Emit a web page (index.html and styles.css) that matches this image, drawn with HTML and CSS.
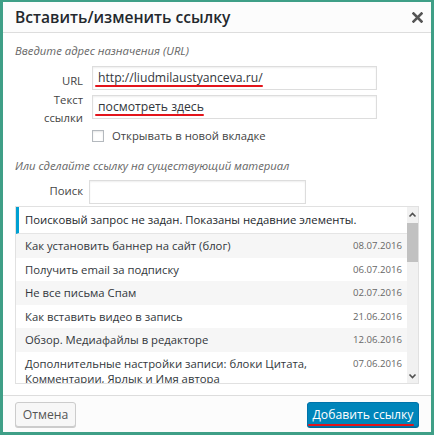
FILE: index.html
```html
<!DOCTYPE html>
<html lang="ru">
<head>
<meta charset="utf-8">
<title>Вставить/изменить ссылку</title>
<link rel="stylesheet" href="styles.css">
</head>
<body>
<div class="dialog">
  <div class="head">
    <h1 class="title">Вставить/изменить ссылку</h1>
    <span class="close">
      <svg width="11" height="11" viewBox="0 0 11 11"><path d="M1.5 1.5 L9.5 9.5 M9.5 1.5 L1.5 9.5" stroke="#555" stroke-width="2.6" stroke-linecap="square"/></svg>
    </span>
  </div>
  <div class="body">
    <p class="hint">Введите адрес назначения (URL)</p>
    <div class="row row-url">
      <label class="lbl">URL</label>
      <div class="field"><span class="mark">http://liudmilaustyanceva.ru/</span></div>
    </div>
    <div class="row row-text">
      <label class="lbl">Текст<br>ссылки</label>
      <div class="field field-text"><span class="mark">посмотреть здесь</span></div>
    </div>
    <div class="check-row">
      <span class="box"></span>
      <span>Открывать в новой вкладке</span>
    </div>
    <p class="hint hint-2">Или сделайте ссылку на существующий материал</p>
    <div class="row row-search">
      <label class="lbl lbl-search">Поиск</label>
      <div class="field field-search"></div>
    </div>
    <div class="results">
      <div class="list">
        <div class="notice">Поисковый запрос не задан. Показаны недавние элементы.</div>
        <div class="item alt"><span class="name">Как установить баннер на сайт (блог)</span><span class="date">08.07.2016</span></div>
        <div class="item"><span class="name">Получить email за подписку</span><span class="date">06.07.2016</span></div>
        <div class="item alt"><span class="name">Не все письма Спам</span><span class="date">02.07.2016</span></div>
        <div class="item"><span class="name">Как вставить видео в запись</span><span class="date">21.06.2016</span></div>
        <div class="item alt"><span class="name">Обзор. Медиафайлы в редакторе</span><span class="date">12.06.2016</span></div>
        <div class="item"><span class="name">Дополнительные настройки записи: блоки Цитата, Комментарии, Ярлык и Имя автора</span><span class="date">07.06.2016</span></div>
      </div>
      <div class="scrollbar">
        <svg class="arrow" width="11" height="16" viewBox="0 0 11 16"><path d="M2.5 9.5 L5.5 6.5 L8.5 9.5" fill="none" stroke="#505050" stroke-width="1.6"/></svg>
        <div class="thumb"></div>
        <div class="track"></div>
        <svg class="arrow" width="11" height="14" viewBox="0 0 11 14"><path d="M2.5 5.5 L5.5 8.5 L8.5 5.5" fill="none" stroke="#505050" stroke-width="1.6"/></svg>
      </div>
    </div>
  </div>
  <div class="foot">
    <button class="btn btn-cancel">Отмена</button>
    <button class="btn btn-primary"><span class="mark mark-btn">Добавить ссылку</span></button>
  </div>
</div>
</body>
</html>
```
FILE: styles.css
```css
* { box-sizing: border-box; }
html, body { margin: 0; padding: 0; background: #fff; }
body {
  font-family: "Open Sans", "Noto Sans", sans-serif;
  color: #32373c;
}

.dialog {
  width: 434px;
  height: 435px;
  border: 3px solid #3f9f87;
  border-top-width: 2px;
  display: flex;
  flex-direction: column;
  background: #fff;
}

.head {
  height: 31px;
  border-bottom: 1px solid #dddddd;
  background: #fcfcfc;
  display: flex;
  align-items: center;
  justify-content: space-between;
  padding: 0 8px 0 12px;
}
.title {
  margin: 0;
  font-size: 15.6px;
  font-weight: 600;
  line-height: 30px;
  color: #23282d;
}
.close { display: flex; align-items: center; }

.body {
  flex: 1;
  padding: 0 12px;
  font-size: 11.3px;
  line-height: 18px;
}
.hint {
  margin: 9px 0 0;
  font-style: italic;
  color: #666;
  font-size: 11.3px;
  line-height: 18px;
}
.hint-2 { margin-top: 12px; }

.row { display: flex; align-items: flex-start; }
.row-url { margin-top: 6px; }
.row-text { margin-top: 1px; }
.row-search { margin-top: 5px; }
.lbl {
  width: 68px;
  text-align: right;
  color: #444;
  font-size: 11.3px;
  line-height: 18px;
  margin-right: 9px;
  padding-top: 6px;
}
.row-text .lbl { padding-top: 0; }
.row-search .lbl { padding-top: 2px; margin-right: 6px; }

.field {
  width: 285px;
  height: 24px;
  border: 1px solid #dddddd;
  box-shadow: inset 0 1px 2px rgba(0,0,0,0.07);
  background: #fff;
  padding: 0 5px;
  font-size: 12.2px;
  line-height: 22px;
  color: #32373c;
  white-space: nowrap;
}
.field-text { margin-top: 4px; }
.field-search { width: 217px; height: 24px; }

.mark { position: relative; }
.mark::after {
  content: "";
  position: absolute;
  left: -3px;
  right: 0;
  bottom: -1px;
  height: 2px;
  border-radius: 1px;
  background: #e3141b;
}
.mark-btn::after { left: -5px; right: -1px; bottom: -3px; }

.check-row {
  display: flex;
  align-items: center;
  margin-left: 77px;
  height: 18px;
  color: #444;
}
.box {
  width: 12px;
  height: 12px;
  border: 1px solid #b4b9be;
  background: #fff;
  margin-right: 8px;
  box-shadow: inset 0 1px 2px rgba(0,0,0,0.1);
}

.results {
  margin-top: 2px;
  width: 404px;
  height: 178px;
  border: 1px solid #e1e1e1;
  display: flex;
  overflow: hidden;
}
.list { flex: 1; min-width: 0; }
.notice {
  border-left: 3px solid #00a0d2;
  border-bottom: 1px solid #e5e5e5;
  padding: 4px 6px;
  height: 27px;
  line-height: 18px;
  color: #23282d;
  white-space: nowrap;
}
.item {
  display: flex;
  justify-content: space-between;
  align-items: flex-start;
  padding: 4.25px 5px 4.25px 9px;
  line-height: 15px;
  color: #32373c;
}
.item.alt { background: #f6f6f6; }
.name { flex: 1; }
.date { color: #666; font-size: 9.6px; margin-left: 10px; }

.scrollbar {
  width: 11px;
  display: flex;
  flex-direction: column;
  background: #f1f1f1;
}
.thumb { height: 39px; background: #c1c1c1; }
.track { flex: 1; }
.arrow { display: block; }

.foot {
  height: 37px;
  border-top: 1px solid #dddddd;
  background: #fcfcfc;
  display: flex;
  justify-content: space-between;
  align-items: flex-start;
  padding: 6px 12px 0;
}
.btn {
  font-family: "Open Sans", "Noto Sans", sans-serif;
  font-size: 12.2px;
  height: 25px;
  border-radius: 3px;
  padding: 0;
  line-height: 22px;
  white-space: nowrap;
}
.btn-cancel {
  width: 61px;
  border: 1px solid #cccccc;
  background: #f7f7f7;
  color: #555;
  box-shadow: 0 1px 0 #cccccc;
}
.btn-primary {
  width: 112px;
  border: 1px solid #0073aa;
  background: #0085ba;
  color: #fff;
  box-shadow: 0 1px 0 #006799;
}
```
